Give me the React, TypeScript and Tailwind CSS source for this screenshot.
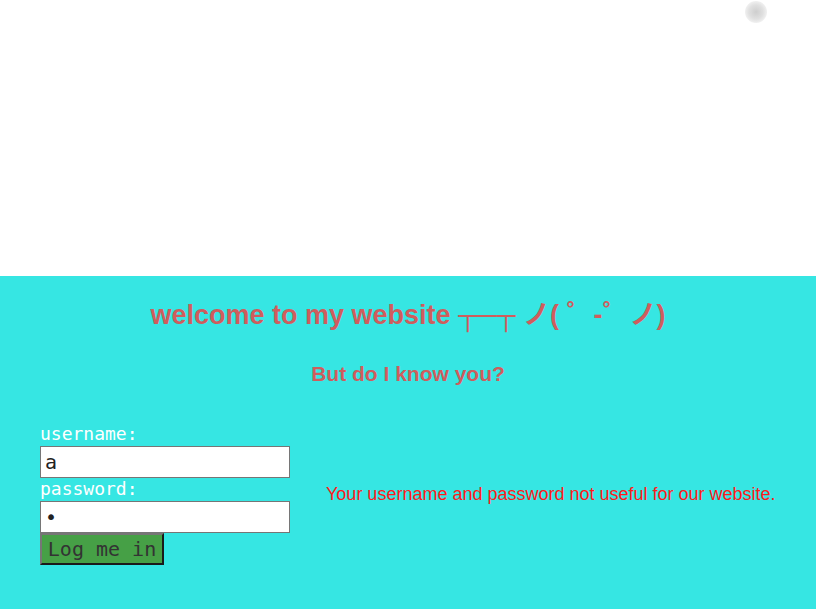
export default function App() {
  return (
    <div className="min-h-[609px] w-full bg-white font-['Liberation_Sans',Arial,sans-serif]">
      <div className="relative h-[276px] bg-white">
        <div className="absolute left-[745px] top-[1px] h-[22px] w-[22px] rounded-full bg-[radial-gradient(circle,#c8c8c8_0%,#dcdcdc_45%,#f2f2f2_75%,transparent_100%)] opacity-90" />
      </div>

      <section className="bg-[#36e6e3] pt-[24px] pb-[44px]">
        <h1 className="text-center text-[27px] font-bold leading-[30px] text-[#cf5d5d]">
          welcome to my website{" "}
          <span className="font-['Liberation_Sans','Noto_Sans_CJK_SC',sans-serif]">┬─┬ ノ( ゜-゜ノ)</span>
        </h1>
        <h2 className="mt-[32px] text-center text-[21px] font-bold leading-[24px] text-[#cf5d5d]">
          But do I know you?
        </h2>

        <div className="mt-[37px] flex items-center gap-[36px] pl-[40px]">
          <form className="flex w-[250px] flex-col font-['DejaVu_Sans_Mono',monospace]" onSubmit={(e) => e.preventDefault()}>
            <label className="pb-[2px] text-[18px] leading-[21px] text-white">username:</label>
            <input
              type="text"
              defaultValue="a"
              className="h-[32px] w-[250px] border border-[#767676] bg-white px-[4px] text-[20px] text-[#222] outline-none"
            />
            <label className="pb-[2px] text-[18px] leading-[21px] text-white">password:</label>
            <input
              type="password"
              defaultValue="a"
              className="h-[32px] w-[250px] border border-[#767676] bg-white px-[4px] text-[20px] text-[#222] outline-none"
            />
            <button
              type="submit"
              className="h-[32px] w-[124px] border-2 border-t-[#767676] border-l-[#767676] border-b-[#1a1a1a] border-r-[#1a1a1a] bg-[#46a046] pb-[1px] text-[20px] leading-none text-[#333]"
            >
              Log me in
            </button>
          </form>

          <p className="text-[18px] text-[#ff1a1a]">Your username and password not useful for our website.</p>
        </div>
      </section>
    </div>
  );
}
